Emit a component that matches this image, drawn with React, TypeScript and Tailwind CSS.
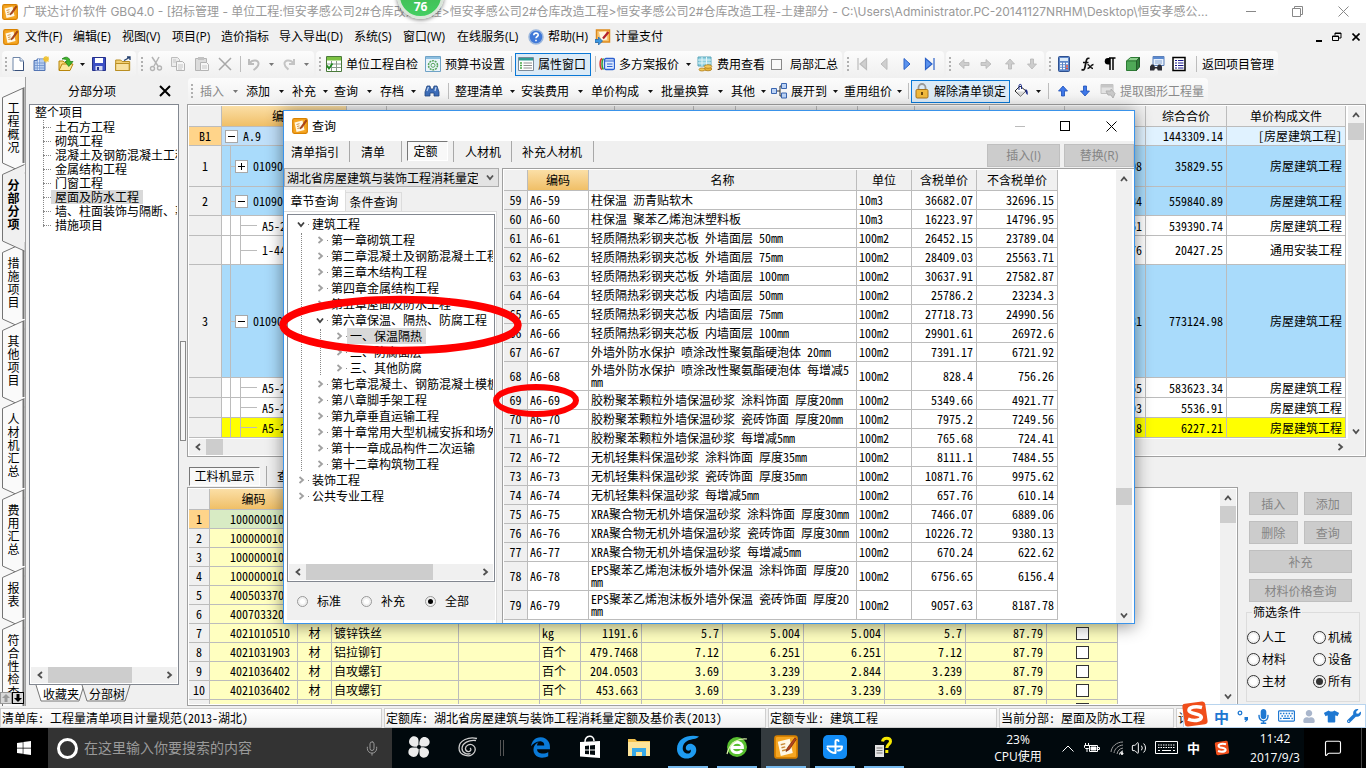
import React from "react";
import { FaWindows, FaEdgeLegacy, FaMicrophone, FaRegKeyboard, FaTshirt, FaWrench, FaUser } from "react-icons/fa";
import { Mic, MessageSquare, Volume2 } from "lucide-react";

type Kids = { children?: React.ReactNode; className?: string };

/* ---------- icons ---------- */

const Svg = ({ children, className = "h-4 w-4" }: Kids) => (
  <svg viewBox="0 0 16 16" className={"shrink-0 " + className} fill="none" aria-hidden="true">
    {children}
  </svg>
);

const AppIcon = ({ className }: { className?: string }) => (
  <Svg className={className}>
    <rect x="0.7" y="0.7" width="14.6" height="14.6" rx="1.5" fill="#f5a623" stroke="#d98200" strokeWidth="1.2" />
    <path d="M2.5 4.5l8-2 2 9.500-8 2z" fill="#fff8e6" />
    <path d="M4.500 6.500l3-.8M5 8.500l2.500-.6M5.400 10.500l4-1" stroke="#c98a3a" strokeWidth="0.9" />
    <path d="M14 1.800L9 8.500l-1 2.500 2.300-1.400L14.800 3z" fill="#b5441c" stroke="#7a2a10" strokeWidth="0.5" />
  </Svg>
);

const NewIcon = () => (
  <Svg>
    <path d="M3 1.500h7l3.500 3.500v9.500h-10.500z" fill="#fff" stroke="#6f86a8" />
    <path d="M10 1.500v3.500h3.500" fill="#dbe6f5" stroke="#6f86a8" />
    <path d="M13.500 6v8.500H5" stroke="#38507a" />
  </Svg>
);
const NewProjectIcon = () => (
  <Svg>
    <path d="M1 4.500h3V3h8v11.500H1z" fill="#8fb2e6" stroke="#5476b4" />
    <path d="M3 5v9M5.500 3v11M8 3v11M10 3v11" stroke="#e6effc" strokeWidth="0.9" />
    <path d="M1 7h11M1 9.500h11M1 12h11" stroke="#6d8fca" strokeWidth="0.8" />
    <path d="M13 0v6.500M10 3h6M11 1l4.500 4.500M15.500 .8l-4.500 4.500" stroke="#f0c230" strokeWidth="1.3" />
  </Svg>
);
const OpenIcon = () => (
  <Svg>
    <path d="M1 14V5h4l1.500 1.500H13V8" fill="#f6d879" stroke="#b8860b" />
    <path d="M1 14.500L4 8h11l-3 6.500z" fill="#fbe79b" stroke="#b8860b" />
    <path d="M4 3c4-3.500 8-1.500 8 2.500h3L10.800 10.500 7 5.500h2C8.800 3.500 7 2.800 4 3z" fill="#3db52b" stroke="#1c7a12" strokeWidth="0.7" />
  </Svg>
);
const SaveIcon = () => (
  <Svg>
    <path d="M1.500 1.500h13v13h-13z" fill="#3c4fc4" stroke="#24308a" />
    <path d="M4 2h8v5H4z" fill="#fff" />
    <path d="M4.500 10h7v4.500h-7z" fill="#d7dcf3" />
    <path d="M6 11h2v3H6z" fill="#24308a" />
  </Svg>
);
const FolderIcon = () => (
  <Svg>
    <path d="M.7 4h5l1.500 1.500h7.500v9H.7z" fill="#f1cf74" stroke="#b98e22" />
    <path d="M.7 7.500h13.500v7H.7z" fill="#f8e1a0" stroke="#b98e22" />
    <path d="M9 4.500L14.500 1.500M12 1h3v3" stroke="#24406e" strokeWidth="1.300" />
  </Svg>
);
const CutIcon = () => (
  <Svg>
    <path d="M4 1l6 9M11 1L6 10" stroke="#b4b4b4" strokeWidth="1.500" />
    <circle cx="4.500" cy="12.500" r="2" stroke="#b4b4b4" strokeWidth="1.400" />
    <circle cx="11.500" cy="12" r="2" stroke="#b4b4b4" strokeWidth="1.400" />
  </Svg>
);
const CopyIcon = () => (
  <Svg>
    <path d="M1.500 1.500h6l2 2v7h-8z" fill="#ececec" stroke="#bdbdbd" />
    <path d="M6.500 5.500h6l2 2v7h-8z" fill="#f6f6f6" stroke="#b4b4b4" />
    <path d="M8 9h5M8 11h5M8 13h4M3 4h3M3 6h3" stroke="#c6c6c6" />
  </Svg>
);
const PasteIcon = () => (
  <Svg>
    <path d="M1.500 2.500h11v12h-11z" fill="#dcdcdc" stroke="#b4b4b4" />
    <path d="M4 1h6v3H4z" fill="#c2c2c2" />
    <path d="M6.500 6.500h6l2 2v6h-8z" fill="#f6f6f6" stroke="#b4b4b4" />
    <path d="M8 10h5M8 12h5" stroke="#c6c6c6" />
  </Svg>
);
const CrossIcon = () => (
  <Svg>
    <path d="M2 2l12 12M14 2L2 14" stroke="#a8a8a8" strokeWidth="1.500" />
  </Svg>
);
const UndoIcon = () => (
  <Svg>
    <path d="M3 3v5h5" stroke="#bcbcbc" strokeWidth="2" />
    <path d="M3.500 7.500C6 3.500 13 3.500 12.500 8c-.3 3-2.500 4.500-5 6" stroke="#bcbcbc" strokeWidth="2" />
  </Svg>
);
const RedoIcon = () => (
  <Svg>
    <path d="M13 3v5H8" stroke="#c4c4c4" strokeWidth="2" />
    <path d="M12.500 7.500C10 3.500 3 3.500 3.500 8c.3 3 2 4 4 5.500" stroke="#c4c4c4" strokeWidth="2" />
  </Svg>
);
const CheckSheetIcon = () => (
  <Svg>
    <path d="M.5 .5h15v15H.5z" fill="#fff" stroke="#4a7a3a" />
    <path d="M1 1h14v3.500H1z" fill="#7dc242" />
    <path d="M5.500 5v10M10.500 5v10M1 8h14M1 11.500h14" stroke="#8a9a8a" />
    <path d="M1 9.500l2 3 3.500-5" stroke="#1f8a1f" strokeWidth="1.800" />
  </Svg>
);
const GearSheetIcon = () => (
  <Svg>
    <path d="M.5 .5h15v15H.5z" fill="#eaf4fb" stroke="#6fa3c7" />
    <path d="M1 1h14v2H1z" fill="#8dbfe0" />
    <circle cx="8" cy="9.300" r="4.500" stroke="#58a55c" strokeWidth="1.500" strokeDasharray="2 .8" />
    <circle cx="8" cy="9.300" r="2" stroke="#58a55c" />
  </Svg>
);
const WindowIcon = () => (
  <Svg>
    <path d="M.5 1.500h15v13H.5z" fill="#fff" stroke="#7b8a99" />
    <path d="M1 2h14v2.500H1z" fill="#2f9c95" />
    <path d="M2 7h2M2 9.500h2M2 12h2" stroke="#4aa84a" strokeWidth="1.300" />
    <path d="M5.500 7H14M5.500 9.500H14M5.500 12H14" stroke="#8f8f8f" />
  </Svg>
);
const PlansIcon = () => (
  <Svg>
    <path d="M3 2.500C.5 4 .5 12 3 13.500" stroke="#d33" strokeWidth="1.500" />
    <path d="M4.500 2.500C2.500 4 2.500 12 4.500 13.500" stroke="#2d9a3a" strokeWidth="1.500" />
    <rect x="5.500" y="2.500" width="10" height="11" rx="1.500" fill="#dfeaff" stroke="#2b5fd0" strokeWidth="1.300" />
    <path d="M6 5h9M8 8h5.500M8 10.500h5.500" stroke="#2b5fd0" strokeWidth="1.200" />
  </Svg>
);
const FeeIcon = () => (
  <Svg>
    <path d="M1 1h13v9H1z" fill="#8fd0e0" stroke="#5aa6ba" />
    <path d="M1 4h13M1 7h13M5 1v9M9.500 1v9" stroke="#e3f5f8" />
    <ellipse cx="11" cy="13" rx="3.800" ry="1.800" fill="#e8b53a" stroke="#a87410" strokeWidth="0.7" />
    <ellipse cx="11" cy="10.500" rx="3.800" ry="1.800" fill="#f3c95c" stroke="#a87410" strokeWidth="0.7" />
    <ellipse cx="5" cy="13.500" rx="3" ry="1.500" fill="#f3c95c" stroke="#a87410" strokeWidth="0.7" />
  </Svg>
);
const NavIcon = ({ kind }: { kind: "first" | "prev" | "next" | "last" }) => {
  const on = kind === "next" || kind === "last";
  const fill = on ? "#5b93ee" : "#cfcfcf";
  const line = on ? "#2c62c8" : "#bcbcbc";
  return (
    <Svg>
      {kind === "first" && <path d="M4 2v12M12.500 2.500L6 8l6.500 5.500z" fill={fill} stroke={line} strokeWidth="1.200" />}
      {kind === "prev" && <path d="M11 2.500L5 8l6 5.500z" fill={fill} stroke={line} />}
      {kind === "next" && <path d="M5 2.500L11 8l-6 5.500z" fill={fill} stroke={line} />}
      {kind === "last" && <path d="M12 2v12M3.500 2.500L10 8l-6.500 5.500z" fill={fill} stroke={line} strokeWidth="1.200" />}
    </Svg>
  );
};
const ArrowIcon = ({ dir, on }: { dir: "l" | "r" | "u" | "d"; on?: boolean }) => {
  const paths = {
    l: "M3 8l5-4.500v3h5v3H8v3z",
    r: "M13 8L8 3.500v3H3v3h5v3z",
    u: "M8 3l4.500 5h-3v5h-3V8h-3z",
    d: "M8 13L3.500 8h3V3h3v5h3z",
  };
  return (
    <Svg>
      <path d={paths[dir]} fill={on ? "#3f78e8" : "#cdcdcd"} stroke={on ? "#1c4fb8" : "#b6b6b6"} strokeWidth="0.8" />
    </Svg>
  );
};
const CalcIcon = () => (
  <Svg>
    <rect x="2.500" y=".5" width="11" height="15" rx="1" fill="#5d86c9" stroke="#2d4f8f" />
    <path d="M4 2h8v3H4z" fill="#dcebf9" />
    <path d="M4 7.500h8M4 10h8M4 12.500h8" stroke="#fff" strokeWidth="1.600" strokeDasharray="2 1" />
    <path d="M10 10h2M10 12.500h2" stroke="#e04a3a" strokeWidth="1.600" />
  </Svg>
);
const FxIcon = () => (
  <Svg>
    <path d="M10.500 2.500C8 1.500 7.500 3.500 7 6l-1 5c-.5 3-1.500 3.500-3.500 2.500M4 6.500h5.500" stroke="#111" strokeWidth="1.700" />
    <path d="M8.500 8.500c2 0 2.500 4 5.500 4M14.500 8.500C12 8.500 11 12.500 8.500 12.500" stroke="#111" strokeWidth="1.300" />
  </Svg>
);
const ParaIcon = () => (
  <Svg>
    <path d="M7 2h6.500M8 2v12M11 2v12" stroke="#000" strokeWidth="1.500" />
    <path d="M8 2H6a3 3 0 000 6.500h2z" fill="#000" />
  </Svg>
);
const CubeIcon = () => (
  <Svg>
    <path d="M1.500 5l4-3.500h9L11.500 5z" fill="#8fd18f" stroke="#2d7a34" />
    <path d="M1.500 5h10v9.500h-10z" fill="#4fa957" stroke="#2d7a34" />
    <path d="M11.500 5l3-3.500V11l-3 3.500z" fill="#2f7d38" stroke="#235c2a" />
  </Svg>
);
const FindSheetIcon = () => (
  <Svg>
    <path d="M4 .5h11v9H4z" fill="#e6effb" stroke="#5b7fb8" />
    <path d="M4 1h11v2H4z" fill="#5b8ad0" />
    <path d="M6 5h7M6 7h7" stroke="#8aa6d0" />
    <path d="M1 14.500v-4l1.500-2h2L6 11h2l1.500-2.500h2l1.500 2v4H8.800L8 12.500H6l-.8 2z" fill="#2c2c34" />
  </Svg>
);
const ListIcon = () => (
  <Svg>
    <path d="M2 1.500h12v13H2z" fill="#fff" stroke="#000" strokeWidth="1.500" />
    <path d="M4 4.500h2M4 7h2M4 9.500h2M4 12h2M7 4.500h5.500M7 7h5.500M7 9.500h5.500M7 12h5.500" stroke="#1a1a8c" />
  </Svg>
);
const BinocularsIcon = () => (
  <Svg>
    <path d="M1 13V9l2-6h3l.8 3h2.400L10 3h3l2 6v4h-5v-3H6v3z" fill="#3d6db8" stroke="#24467e" strokeWidth="0.8" />
    <path d="M3 8l1.500-4M11 8l1-4" stroke="#bcd2f2" strokeWidth="1.200" />
  </Svg>
);
const ExpandIcon = () => (
  <Svg>
    <path d="M5 8h4M9 3v10M9 3h2M9 13h2" stroke="#333" />
    <path d="M.5 5.500h5v5h-5zM10.500 .5h5v5h-5zM10.500 10h5v5h-5z" fill="#bcd3f5" stroke="#3b66b0" />
  </Svg>
);
const LockIcon = () => (
  <Svg>
    <path d="M4.500 7V4.500a3.500 3.500 0 017 0V7" stroke="#9a9a9a" strokeWidth="1.800" />
    <rect x="2" y="6.500" width="12" height="8.500" rx="1.200" fill="#f0b93c" stroke="#a8741a" />
    <path d="M8 9v3" stroke="#5b3c08" strokeWidth="1.800" />
  </Svg>
);
const BucketIcon = () => (
  <Svg>
    <path d="M7 3l6 5-5.500 5L2 8z" fill="#fff" stroke="#222" />
    <path d="M4 8.500h8.500L7.500 13z" fill="#d8d8d8" />
    <path d="M6 7V2.500C6 1 8.500 1 8.500 2.500V6" stroke="#1d2c8a" />
    <path d="M12.500 6c2.500 1 2.500 4 2 6-1-1-2-2-2-4z" fill="#1d2c8a" />
  </Svg>
);
const ExtractIcon = () => (
  <Svg>
    <path d="M1 1.500h12v9H1z" fill="#e2e2e2" stroke="#c2c2c2" />
    <path d="M1 2h12v2.500H1z" fill="#c6c6c6" />
    <path d="M6 8h5V6l4 4.500-2 4.500-2-3H8z" fill="#c9c9c9" stroke="#b2b2b2" />
  </Svg>
);
const HelpIcon = () => (
  <Svg>
    <circle cx="8" cy="8" r="7" fill="#3f78d8" stroke="#9db8dd" strokeWidth="1.500" />
    <path d="M5.800 6.300c0-3 4.600-2.800 4.400-.2-.1 1.400-2.200 1.500-2.200 3.200M8 10.800v1.500" stroke="#fff" strokeWidth="1.600" />
  </Svg>
);
const PayIcon = () => (
  <Svg>
    <path d="M1.500 1h13v12h-13z" fill="#f8c470" stroke="#dd8a1c" strokeWidth="1.500" />
    <path d="M4 3l7-.5 1 8-6 1z" fill="#fff6e2" />
    <path d="M13.500 3L8 9.500" stroke="#b3202c" strokeWidth="2.200" />
    <path d="M0 10.500h3.500V8l4 4-4 4v-2.500H0z" fill="#3a96e0" stroke="#1d62a8" strokeWidth="0.7" />
  </Svg>
);

const Caret = ({ muted }: { muted?: boolean }) => (
  <svg viewBox="0 0 5 3" className="h-[3px] w-[5px]" aria-hidden="true">
    <path d="M0 0h5L2.500 3z" fill={muted ? "#777" : "#111"} />
  </svg>
);

const Chevron = ({ dir, className }: { dir: "u" | "d" | "l" | "r"; className?: string }) => {
  const d = { u: "M2 7l3-3.500L8 7", d: "M2 3.500L5 7l3-3.500", l: "M7 2L3.500 5 7 8", r: "M3.500 2L7 5 3.500 8" };
  return (
    <svg viewBox="0 0 10 10" className={"h-[10px] w-[10px] shrink-0 " + (className ?? "text-[#505050]")} aria-hidden="true">
      <path d={d[dir]} fill="none" stroke="currentColor" strokeWidth="1.800" />
    </svg>
  );
};

const SogouIcon = ({ className }: { className?: string }) => (
  <svg viewBox="0 0 28 28" className={className} aria-hidden="true">
    <rect x="2.500" y="2.500" width="23" height="23" rx="3" fill="#f04e1b" transform="rotate(-8 14 14)" />
    <path d="M21 7.500c-6-1.600-13-.6-13 2.800 0 4.200 12.500 2.600 12.300 6.900-.1 3.600-7.800 4.200-13.300 2" fill="none" stroke="#fff" strokeWidth="3.600" />
  </svg>
);

/* ---------- toolbar parts ---------- */

const Grip = () => (
  <span className="flex w-2 shrink-0 flex-col items-center gap-[2px]">
    {[0, 1, 2, 3].map((i) => (
      <i key={i} className="h-[2px] w-[2px] bg-[#b0b0b0]" />
    ))}
  </span>
);
const Group = ({ children, className = "" }: Kids) => (
  <div className={"flex h-[26px] shrink-0 items-center rounded-sm bg-linear-to-b from-[#fcfcfc] to-[#f0f0f0] " + className}>
    <Grip />
    {children}
  </div>
);
const Tool = ({ w, label, children }: { w: string; label: string; children: React.ReactNode }) => (
  <button aria-label={label} className={"flex h-full shrink-0 items-center justify-center " + w}>
    {children}
  </button>
);
const Sep = ({ w = "w-2" }: { w?: string }) => (
  <span className={"flex shrink-0 justify-center " + w}>
    <i className="h-4 w-px bg-[#bdbdbd]" />
  </span>
);
const TextTool = ({ w, icon, text, caret, muted }: { w: string; icon?: React.ReactNode; text: string; caret?: boolean; muted?: boolean }) => (
  <button className={"flex h-full shrink-0 items-center gap-1 whitespace-nowrap " + w + (muted ? " text-[#8a8a8a]" : "")}>
    {icon}
    {text}
    {caret && (
      <span className="flex flex-1 justify-center pr-1">
        <Caret muted={muted} />
      </span>
    )}
  </button>
);

/* ---------- scroll bars ---------- */

const VScroll = ({ before, thumb }: { before: string; thumb: string }) => (
  <div className="flex w-4 shrink-0 flex-col items-center bg-[#f0f0f0]">
    <button aria-label="向上滚动" className="flex h-[17px] items-center"><Chevron dir="u" /></button>
    <div className="flex w-full flex-1 flex-col">
      <i className={before} />
      <i className={"w-full bg-[#cdcdcd] " + thumb} />
    </div>
    <button aria-label="向下滚动" className="flex h-[17px] items-center"><Chevron dir="d" /></button>
  </div>
);
const HScroll = ({ thumb }: { thumb: string }) => (
  <div className="flex h-4 shrink-0 items-center bg-[#f0f0f0]">
    <button aria-label="向左滚动" className="flex w-[17px] justify-center"><Chevron dir="l" /></button>
    <div className="h-full flex-1"><i className={"block h-full bg-[#cdcdcd] " + thumb} /></div>
    <button aria-label="向右滚动" className="flex w-[17px] justify-center"><Chevron dir="r" /></button>
  </div>
);

/* ---------- side tabs ---------- */

const sideTabs = [
  { text: "工程概况", h: 77, cls: "h-[77px]" },
  { text: "分部分项", h: 78, cls: "h-[78px]", on: true },
  { text: "措施项目", h: 78, cls: "h-[78px]" },
  { text: "其他项目", h: 78, cls: "h-[78px]" },
  { text: "人材机汇总", h: 91, cls: "h-[91px]" },
  { text: "费用汇总", h: 78, cls: "h-[78px]" },
  { text: "报表", h: 52, cls: "h-[52px]" },
  { text: "符合性检查", h: 91, cls: "h-[91px]" },
];

const SideTabs = () => (
  <nav className="relative w-[25px] shrink-0 overflow-hidden bg-[#f7f7f7] pt-5">
    {sideTabs.map((t) => (
      <button key={t.text} className={"relative flex w-full items-start justify-center pt-1 " + t.cls + (t.on ? " z-10 font-bold" : "")}>
        <svg className="absolute inset-0 h-full w-full overflow-visible" aria-hidden="true">
          <path d={`M24.500 -9.500L2.500 .5V${t.h - 11}L24.500 ${t.h - 1}`} fill={t.on ? "#f0f0f0" : "#fafafa"} stroke="#747474" />
          {!t.on && <path d={`M23.500 -9V${t.h - 11}`} stroke="#747474" strokeWidth="2" />}
        </svg>
        <span className="relative w-[14px] whitespace-normal break-all pl-[2px] leading-[13px]">{t.text}</span>
      </button>
    ))}
    <div className="absolute bottom-[2px] left-0 z-20 flex w-6 bg-[#d8d8d8]">
      <button aria-label="上一页" className="flex h-3 w-3 items-center justify-center border border-[#999]">
        <svg viewBox="0 0 8 8" className="h-2 w-2"><path d="M4 0l4 4H5.500v4h-3V4H0z" fill="#999" /></svg>
      </button>
      <button aria-label="下一页" className="flex h-3 w-3 items-center justify-center border border-black">
        <svg viewBox="0 0 8 8" className="h-2 w-2"><path d="M4 8l4-4H5.500V0h-3v4H0z" fill="#000" /></svg>
      </button>
    </div>
  </nav>
);

/* ---------- left project tree ---------- */

const sections = ["土石方工程", "砌筑工程", "混凝土及钢筋混凝土工程", "金属结构工程", "门窗工程", "屋面及防水工程", "墙、柱面装饰与隔断、幕墙工程", "措施项目"];

const LeftPanel = () => (
  <aside className="flex w-[154px] shrink-0 flex-col border-l border-[#a0a0a0] pl-[3px]">
    <header className="flex h-[27px] shrink-0 items-center pr-2">
      <h2 className="flex-1 pl-[39px]">分部分项</h2>
      <button aria-label="关闭">
        <svg viewBox="0 0 12 12" className="h-3 w-3"><path d="M1 1l10 10M11 1L1 11" stroke="#000" strokeWidth="2" /></svg>
      </button>
    </header>
    <div className="flex min-h-0 flex-1 flex-col border border-[#828790] bg-white px-px pb-px">
      <ul className="flex-1 overflow-hidden whitespace-nowrap leading-[14px]">
        <li className="pl-1">
          <span className="block h-[15px]">整个项目</span>
          <ul className="relative ml-2">
            <li aria-hidden="true" className="absolute left-0 top-0 h-[107px] border-l border-dotted border-[#888]" />
            {sections.map((s, i) => (
              <li key={s} className="flex h-[14px] items-center">
                <i className="w-2 shrink-0 border-t border-dotted border-[#888]" />
                <span className={i === 5 ? "bg-[#d9d9d9] pl-1 pr-1" : "pl-1"}>{s}</span>
              </li>
            ))}
          </ul>
        </li>
      </ul>
      <HScroll thumb="w-[84px]" />
    </div>
    <div className="flex h-[21px] shrink-0 items-start pl-2">
      {["收藏夹", "分部树"].map((t, i) => (
        <button key={t} className="relative h-[17px] w-[46px] pl-[6px] text-left leading-[17px]">
          <svg className="absolute inset-0 h-full w-full overflow-visible" aria-hidden="true">
            <path d="M-1 0L4 16H42L47 0" fill={i ? "#f0f0f0" : "#fff"} stroke="#777" />
          </svg>
          <span className="relative">{t}</span>
        </button>
      ))}
    </div>
  </aside>
);

/* ---------- top grid ---------- */

const priceCols = ["w-[33px]", "w-[125px]", "w-[40px]", "", "w-[79px]", "w-[42px]", "w-[81px]", "w-[41px]", "w-[57px]", "w-[75px]", "w-[75px]", "w-[81px]", "w-[81px]", "w-[119px]"];

type PriceRow = { n: string; code: string; lvl: number; sign?: string; h: string; bg: string; part: string; total: string; file: string };
const priceRows: PriceRow[] = [
  { n: "B1", code: "A.9", lvl: 0, sign: "-", h: "h-[19px]", bg: "bg-[#e0f2ff]", part: "", total: "1443309.14", file: "[房屋建筑工程]" },
  { n: "1", code: "01090", lvl: 1, sign: "+", h: "h-[41px]", bg: "bg-[#a9dbfb]", part: "08", total: "35829.55", file: "房屋建筑工程" },
  { n: "2", code: "01090", lvl: 1, sign: "-", h: "h-[29px]", bg: "bg-[#a9dbfb]", part: "34", total: "559840.89", file: "房屋建筑工程" },
  { n: "", code: "A5-2", lvl: 2, h: "h-[20px]", bg: "bg-white", part: "61", total: "539390.74", file: "房屋建筑工程" },
  { n: "", code: "1-44", lvl: 2, h: "h-[29px]", bg: "bg-white", part: "76", total: "20427.25", file: "通用安装工程" },
  { n: "3", code: "01090", lvl: 1, sign: "-", h: "h-[113px]", bg: "bg-[#a9dbfb]", part: "31", total: "773124.98", file: "房屋建筑工程" },
  { n: "", code: "A5-2", lvl: 2, h: "h-[20px]", bg: "bg-white", part: "65", total: "583623.34", file: "房屋建筑工程" },
  { n: "", code: "A5-2", lvl: 2, h: "h-[20px]", bg: "bg-white", part: "93", total: "5536.91", file: "房屋建筑工程" },
  { n: "", code: "A5-2", lvl: 2, h: "h-[20px]", bg: "bg-[#ffff00]", part: "8", total: "6227.21", file: "房屋建筑工程" },
];

const ToggleMark = ({ plus }: { plus: boolean }) => (
  <svg viewBox="0 0 9 9" className="h-[9px] w-[9px]" aria-hidden="true">
    <path d={plus ? "M1 4.500h7M4.500 1v7" : "M1 4.500h7"} stroke="#000" />
  </svg>
);

const PriceGrid = () => (
  <section className="flex h-[353px] shrink-0 flex-col border border-[#a0a0a0] bg-white p-px">
    <div className="flex min-h-0 flex-1">
      <table className="mr-[2px] h-[332px] flex-1 table-fixed border-separate border-spacing-0 leading-3">
        <colgroup>{priceCols.map((c, i) => <col key={i} className={c} />)}</colgroup>
        <thead>
          <tr className="h-[21px]">
            {priceCols.map((_, i) => (
              <th key={i} className={"border-b border-r border-[#bcbcbc] p-0 font-normal " + (i === 1 ? "bg-linear-to-b from-[#fbdfa6] to-[#f0bf66]" : "bg-[#f0f0f0]")}>
                {i === 1 ? "编码" : i === 12 ? "综合合价" : i === 13 ? "单价构成文件" : ""}
              </th>
            ))}
          </tr>
        </thead>
        <tbody>
          {priceRows.map((r, k) => (
            <tr key={k} className={r.h + " " + r.bg}>
              <th className={"border-b border-r border-[#bcbcbc] p-0 font-normal " + (k === 0 ? "bg-[#ffd48a]" : "bg-[#f0f0f0]")}>{r.n}</th>
              <td className={"h-full border-b border-r border-[#bcbcbc] p-0" + (k === 0 ? " bg-[#bfdff9]" : "")}>
                <div className={"flex h-full items-center " + (r.lvl === 0 ? "pl-[3px]" : "ml-2 border-l border-[#bcbcbc]")}>
                  {r.lvl === 2 ? (
                    <span className="ml-[9px] flex h-full items-center border-l border-[#bcbcbc]">
                      <i className="mr-[5px] w-4 border-t border-[#bcbcbc]" />
                      {r.code}
                    </span>
                  ) : (
                    <>
                      {r.lvl === 1 && <i className="w-1 border-t border-[#bcbcbc]" />}
                      <button aria-label="展开或折叠" className="mr-[5px] flex h-[13px] w-[13px] items-center justify-center border border-[#a8a8a8] bg-white">
                        <ToggleMark plus={r.sign === "+"} />
                      </button>
                      {r.code}
                    </>
                  )}
                </div>
              </td>
              {[2, 3, 4, 5, 6, 7, 8, 9, 10].map((i) => <td key={i} className="border-b border-r border-[#bcbcbc]" />)}
              <td className="border-b border-r border-[#bcbcbc] p-0 pr-[3px] text-right">{r.part}</td>
              <td className="border-b border-r border-[#bcbcbc] p-0 pr-[3px] text-right">{r.total}</td>
              <td className="whitespace-nowrap border-b border-r border-[#bcbcbc] p-0 pr-[3px] text-right">{r.file}</td>
            </tr>
          ))}
        </tbody>
      </table>
      <VScroll before="h-0" thumb="h-[17px]" />
    </div>
    <div className="bg-[#f0f0f0] pr-4">
      <HScroll thumb="w-[17px]" />
    </div>
  </section>
);

/* ---------- bottom grid ---------- */

const matCols = ["w-[21px]", "w-[88px]", "w-[34px]", "w-[127px]", "w-[81px]", "w-[41px]", "w-[61px]", "w-[81px]", "w-[81px]", "w-[81px]", "w-[81px]", "w-[81px]", "w-[71px]"];
const matRows: string[][] = [
  ["1000000100"], ["1000000100"], ["1000000100"], ["1000000100"], ["4005033700"], ["4007033200"],
  ["4021010510", "材", "镀锌铁丝", "", "kg", "1191.6", "5.7", "5.004", "5.004", "5.7", "87.79"],
  ["4021031903", "材", "铝拉铆钉", "", "百个", "479.7468", "7.12", "6.251", "6.251", "7.12", "87.79"],
  ["4021036402", "材", "自攻螺钉", "", "百个", "204.0503", "3.69", "3.239", "2.844", "3.239", "87.79"],
  ["4021036402", "材", "自攻螺钉", "", "百个", "453.663", "3.69", "3.239", "3.239", "3.69", "87.79"],
  [""],
];

const MaterialGrid = () => (
  <section className="flex min-w-0 flex-1 overflow-hidden border border-[#a0a0a0] bg-white p-px">
    <div className="flex-1 overflow-hidden">
      <table className="w-[929px] table-fixed border-separate border-spacing-0 leading-3">
        <colgroup>{matCols.map((c, i) => <col key={i} className={c} />)}</colgroup>
        <thead>
          <tr className="h-[21px]">
            {matCols.map((_, i) => (
              <th key={i} className={"border-b border-r border-[#bcbcbc] p-0 font-normal " + (i === 1 ? "bg-linear-to-b from-[#fbdfa6] to-[#f0bf66]" : "bg-[#f0f0f0]")}>
                {i === 1 ? "编码" : ""}
              </th>
            ))}
          </tr>
        </thead>
        <tbody>
          {matRows.map((r, k) => (
            <tr key={k} className="h-[19px] bg-[#ffffc0]">
              <th className={"border-b border-r border-[#bcbcbc] p-0 font-normal " + (k === 0 ? "bg-[#ffd48a]" : "bg-[#f0f0f0]")}>{k < 10 ? k + 1 : ""}</th>
              {Array.from({ length: 11 }, (_, i) => (
                <td
                  key={i}
                  className={
                    "border-b border-r border-[#bcbcbc] p-0 " +
                    (i === 0 ? "pr-[7px] text-right " : i === 1 ? "text-center " : i < 5 ? "pl-[2px] text-left " : "pr-[3px] text-right ") +
                    (k === 0 ? "bg-[#d8ebc4]" : "")
                  }
                >
                  {r[i] ?? ""}
                </td>
              ))}
              <td className="border-b border-r border-[#bcbcbc] p-0">
                <input type="checkbox" aria-label={"选择 " + (k + 1)} className="mx-auto block h-[13px] w-[13px] appearance-none border border-[#333] bg-white" />
              </td>
            </tr>
          ))}
        </tbody>
      </table>
    </div>
    <VScroll before="h-0" thumb="h-[17px]" />
  </section>
);

const grayBtn = "flex h-[23px] items-center justify-center border border-[#bfbfbf] bg-[#cccccc] text-[#858585]";
const filters = ["人工", "机械", "材料", "设备", "主材", "所有"];

const SidePanel = () => (
  <section className="w-[128px] shrink-0 pl-2 pr-[6px] pt-[5px]">
    <div className="grid grid-cols-2 gap-x-[6px] gap-y-[6px] pl-[3px] pr-2">
      {["插入", "添加", "删除", "查询"].map((b) => (
        <button key={b} className={grayBtn}>{b}</button>
      ))}
      <button className={grayBtn + " col-span-2"}>补充</button>
      <button className={grayBtn + " col-span-2"}>材料价格查询</button>
    </div>
    <fieldset className="mt-[2px] h-[98px] border border-[#dcdcdc]">
      <legend className="ml-[5px] px-px leading-4">筛选条件</legend>
      <div className="grid grid-cols-[66px_1fr] gap-y-[6px] pt-[9px]">
        {filters.map((f) => (
          <label key={f} className="flex h-4 items-center gap-[2px] whitespace-nowrap">
            <input
              type="radio"
              name="filter"
              defaultChecked={f === "所有"}
              className="h-[13px] w-[13px] appearance-none rounded-full border border-[#333] bg-white bg-clip-content p-[2px] checked:bg-[#333]"
            />
            {f}
          </label>
        ))}
      </div>
    </fieldset>
  </section>
);

/* ---------- query dialog ---------- */

type Node = { t: string; l: number; open?: boolean; sel?: boolean };
const nodes: Node[] = [
  { t: "建筑工程", l: 0, open: true },
  { t: "第一章砌筑工程", l: 1 },
  { t: "第二章混凝土及钢筋混凝土工程", l: 1 },
  { t: "第三章木结构工程", l: 1 },
  { t: "第四章金属结构工程", l: 1 },
  { t: "第五章屋面及防水工程", l: 1 },
  { t: "第六章保温、隔热、防腐工程", l: 1, open: true },
  { t: "一、保温隔热", l: 2, sel: true },
  { t: "二、防腐面层", l: 2 },
  { t: "三、其他防腐", l: 2 },
  { t: "第七章混凝土、钢筋混凝土模板", l: 1 },
  { t: "第八章脚手架工程", l: 1 },
  { t: "第九章垂直运输工程", l: 1 },
  { t: "第十章常用大型机械安拆和场外", l: 1 },
  { t: "第十一章成品构件二次运输", l: 1 },
  { t: "第十二章构筑物工程", l: 1 },
  { t: "装饰工程", l: 0 },
  { t: "公共专业工程", l: 0 },
];
const indent = ["pl-[7px]", "pl-[26px]", "pl-[45px]"];

const quota: [string, string, string, string][] = [
  ["柱保温 沥青贴软木", "10m3", "36682.07", "32696.15"],
  ["柱保温 聚苯乙烯泡沫塑料板", "10m3", "16223.97", "14796.95"],
  ["轻质隔热彩钢夹芯板 外墙面层 50mm", "100m2", "26452.15", "23789.04"],
  ["轻质隔热彩钢夹芯板 外墙面层 75mm", "100m2", "28409.03", "25563.71"],
  ["轻质隔热彩钢夹芯板 外墙面层 100mm", "100m2", "30637.91", "27582.87"],
  ["轻质隔热彩钢夹芯板 内墙面层 50mm", "100m2", "25786.2", "23234.3"],
  ["轻质隔热彩钢夹芯板 内墙面层 75mm", "100m2", "27718.73", "24990.56"],
  ["轻质隔热彩钢夹芯板 内墙面层 100mm", "100m2", "29901.61", "26972.6"],
  ["外墙外防水保护 喷涂改性聚氨酯硬泡体 20mm", "100m2", "7391.17", "6721.92"],
  ["外墙外防水保护 喷涂改性聚氨酯硬泡体 每增减5\nmm", "100m2", "828.4", "756.26"],
  ["胶粉聚苯颗粒外墙保温砂浆 涂料饰面 厚度20mm", "100m2", "5349.66", "4921.77"],
  ["胶粉聚苯颗粒外墙保温砂浆 瓷砖饰面 厚度20mm", "100m2", "7975.2", "7249.56"],
  ["胶粉聚苯颗粒外墙保温砂浆 每增减5mm", "100m2", "765.68", "724.41"],
  ["无机轻集料保温砂浆 涂料饰面 厚度35mm", "100m2", "8111.1", "7484.55"],
  ["无机轻集料保温砂浆 瓷砖饰面 厚度35mm", "100m2", "10871.76", "9975.62"],
  ["无机轻集料保温砂浆 每增减5mm", "100m2", "657.76", "610.14"],
  ["XRA聚合物无机外墙保温砂浆 涂料饰面 厚度30mm", "100m2", "7466.07", "6889.06"],
  ["XRA聚合物无机外墙保温砂浆 瓷砖饰面 厚度30mm", "100m2", "10226.72", "9380.13"],
  ["XRA聚合物无机外墙保温砂浆 每增减5mm", "100m2", "670.24", "622.62"],
  ["EPS聚苯乙烯泡沫板外墙外保温 涂料饰面 厚度20\nmm", "100m2", "6756.65", "6156.4"],
  ["EPS聚苯乙烯泡沫板外墙外保温 瓷砖饰面 厚度20\nmm", "100m2", "9057.63", "8187.78"],
];
const cell = "border-b border-r border-[#bcbcbc] p-0 ";

const QueryDialog = () => (
  <div
    role="dialog"
    aria-label="查询"
    className="absolute left-[283px] top-[110px] z-30 flex h-[514px] w-[852px] flex-col overflow-hidden border border-[#3a93ea] bg-[#f0f0f0] shadow-[0_2px_16px_rgba(0,0,0,0.45)]"
  >
    <header className="flex h-[30px] shrink-0 items-center bg-white pl-2 font-['Noto_Sans_CJK_SC',sans-serif]">
      <AppIcon />
      <h2 className="flex-1 pl-1">查询</h2>
      <button aria-label="最小化" className="flex w-[45px] justify-center"><i className="h-px w-[10px] bg-[#bbb]" /></button>
      <button aria-label="最大化" className="flex w-[46px] justify-center"><i className="h-[10px] w-[10px] border border-black" /></button>
      <button aria-label="关闭" className="flex w-[46px] justify-center">
        <svg viewBox="0 0 11 11" className="h-[11px] w-[11px]"><path d="M.5 .5l10 10M10.500 .5l-10 10" stroke="#000" /></svg>
      </button>
    </header>
    <nav className="flex h-[27px] shrink-0 items-start">
      <button className="h-[21px] w-[66px] border-r border-[#a8a8a8] pl-[7px] text-left">清单指引</button>
      <button className="h-[21px] w-[52px] border-r border-[#a8a8a8] pl-[11px] text-left">清单</button>
      <span className="flex h-[21px] w-[52px] border-r border-[#a8a8a8] pl-[5px]">
        <button className="h-5 w-[41px] border border-b-white border-l-[#777] border-r-white border-t-[#777] bg-[#f8f8f8] pr-1">定额</button>
      </span>
      <button className="h-[21px] w-[58px] border-r border-[#a8a8a8] pl-[11px] text-left">人材机</button>
      <button className="h-[21px] w-[82px] border-r border-[#a8a8a8] pl-[10px] text-left">补充人材机</button>
      <div className="ml-auto mt-[3px] flex gap-1 font-['Open_Sans','Noto_Sans_CJK_SC',sans-serif]">
        <button className={grayBtn + " w-[73px]"}>插入(I)</button>
        <button className={grayBtn + " w-[70px]"}>替换(R)</button>
      </div>
    </nav>
    <div className="flex min-h-0 flex-1">
      <div className="flex w-[218px] shrink-0 flex-col">
        <label className="relative block h-[19px] w-[215px]">
          <select aria-label="定额库" className="h-full w-full appearance-none overflow-hidden border border-[#adadad] bg-[#e3e3e3] pl-[2px] pr-5 leading-none">
            <option>湖北省房屋建筑与装饰工程消耗量定额及基价表(2013)</option>
          </select>
          <Chevron dir="d" className="absolute right-1 top-1 text-[#555]" />
        </label>
        <div className="flex h-6 shrink-0 items-end">
          <button className="h-[21px] w-[62px] border-r border-[#dcdcdc] bg-white">章节查询</button>
          <button className="h-[19px] w-[56px] border border-b-0 border-l-0 border-[#dcdcdc] bg-[#f0f0f0]">条件查询</button>
        </div>
        <div className="mr-[5px] flex min-h-0 flex-1 flex-col border-r border-t border-[#dcdcdc] bg-white p-[3px] pr-px pt-[2px]">
          <div className="flex min-h-0 flex-1 flex-col border border-[#828790] px-px pb-px">
            <ul className="relative flex-1 overflow-hidden pt-px">
              <li aria-hidden="true" className="absolute left-3 top-[18px] h-[238px] border-l border-dotted border-[#888]" />
              <li aria-hidden="true" className="absolute left-[31px] top-[114px] h-[46px] border-l border-dotted border-[#888]" />
              {nodes.map((n) => (
                <li key={n.t} className={"flex h-4 items-center whitespace-nowrap " + indent[n.l]}>
                  <Chevron dir={n.open ? "d" : "r"} className={n.open ? "text-[#404040]" : "text-[#a0a0a0]"} />
                  <i className={"ml-[2px] h-px w-px shrink-0 bg-[#888]" + (n.sel ? "" : " mr-[3px]")} />
                  <span className={n.sel ? "h-4 bg-[#d9d9d9] pl-[3px] pr-1 leading-4" : "leading-4"}>{n.t}</span>
                </li>
              ))}
            </ul>
            <HScroll thumb="w-[127px]" />
          </div>
          <div className="flex h-[38px] shrink-0 items-center bg-[#f0f0f0] pl-[10px]">
            {["标准", "补充", "全部"].map((r) => (
              <label key={r} className="flex w-16 items-center gap-[9px]">
                <input
                  type="radio"
                  name="scope"
                  defaultChecked={r === "全部"}
                  className="h-[11px] w-[11px] appearance-none rounded-full border border-[#999] bg-white bg-clip-content p-[2px] checked:bg-black"
                />
                {r}
              </label>
            ))}
          </div>
        </div>
      </div>
      <div className="flex min-w-0 flex-1 border-l border-t border-[#a0a0a0] bg-white pl-px pt-px">
        <div className="flex-1 overflow-hidden">
          <table className="w-[554px] table-fixed border-separate border-spacing-0 leading-3">
            <colgroup>
              <col className="w-[24px]" />
              <col className="w-[61px]" />
              <col className="w-[268px]" />
              <col className="w-[55px]" />
              <col className="w-[65px]" />
              <col className="w-[81px]" />
            </colgroup>
            <thead>
              <tr className="h-[21px] bg-[#f0f0f0]">
                {["", "编码", "名称", "单位", "含税单价", "不含税单价"].map((h, i) => (
                  <th key={i} className={cell + "font-normal" + (i === 1 ? " bg-linear-to-b from-[#fbdfa6] to-[#f0bf66]" : "")}>{h}</th>
                ))}
              </tr>
            </thead>
            <tbody>
              {quota.map((q, i) => (
                <tr key={i} className={q[0].includes("\n") ? "h-[29px]" : "h-[19px]"}>
                  <th className={cell + "bg-[#f0f0f0] font-normal"}>{59 + i}</th>
                  <td className={cell + "pl-[2px]"}>A6-{59 + i}</td>
                  <td className={cell + "overflow-hidden whitespace-pre pl-[2px]"}>{q[0]}</td>
                  <td className={cell + "pl-[2px]"}>{q[1]}</td>
                  <td className={cell + "pr-[3px] text-right"}>{q[2]}</td>
                  <td className={cell + "pr-[3px] text-right"}>{q[3]}</td>
                </tr>
              ))}
            </tbody>
          </table>
        </div>
        <VScroll before="h-[301px]" thumb="h-[17px]" />
        <i className="w-[2px]" />
      </div>
    </div>
  </div>
);

/* ---------- bars ---------- */

const menus = [
  ["文件(F)", "w-[48px]"], ["编辑(E)", "w-[49px]"], ["视图(V)", "w-[50px]"], ["项目(P)", "w-[49px]"], ["造价指标", "w-[58px]"],
  ["导入导出(D)", "w-[75px]"], ["系统(S)", "w-[49px]"], ["窗口(W)", "w-[54px]"], ["在线服务(L)", "w-[71px]"],
];

const TitleBar = () => (
  <header className="relative flex h-[23px] shrink-0 items-center bg-white pl-[2px] text-[#999]">
    <AppIcon />
    <h1 className="min-w-0 flex-1 overflow-hidden whitespace-nowrap pl-[5px] font-['Inter','Noto_Sans_CJK_SC',sans-serif]">
      广联达计价软件 GBQ4.0 - [招标管理 - 单位工程:恒安孝感公司2#仓库改造工程&gt;恒安孝感公司2#仓库改造工程&gt;恒安孝感公司2#仓库改造工程-土建部分 - C:\Users\Administrator.PC-20141127NRHM\Desktop\恒安孝感公...
    </h1>
    <div className="flex shrink-0 items-center">
      <button aria-label="最小化" className="flex w-[46px] justify-center"><i className="h-px w-[10px] bg-[#888]" /></button>
      <button aria-label="还原" className="flex w-[46px] justify-center">
        <svg viewBox="0 0 11 11" className="h-[11px] w-[11px]" fill="none" stroke="#888"><path d="M.5 2.500h8v8h-8zM2.500 2.500v-2h8v8h-2" /></svg>
      </button>
      <button aria-label="关闭" className="flex w-[46px] justify-center">
        <svg viewBox="0 0 11 11" className="h-[11px] w-[11px]"><path d="M.5 .5l10 10M10.500 .5l-10 10" stroke="#888" /></svg>
      </button>
    </div>
    <div className="absolute left-[397px] top-[-28px] flex h-[47px] w-[47px] items-end justify-center rounded-full border-[3px] border-[#d9e6d9] bg-linear-to-b from-[#3fae4a] to-[#43cf62] pb-[2px] font-['Noto_Sans',sans-serif] text-xs font-bold leading-[14px] text-white shadow-[0_1px_4px_rgba(0,0,0,0.5)]">
      76
    </div>
  </header>
);

const MenuBar = () => (
  <nav className="flex h-[27px] shrink-0 items-center bg-[#f0f0f0] pl-[3px] font-['Open_Sans','Noto_Sans_CJK_SC',sans-serif]">
    <AppIcon />
    <span className="w-[6px]" />
    {menus.map(([t, w]) => (
      <button key={t} className={"shrink-0 whitespace-nowrap text-left " + w}>{t}</button>
    ))}
    <button className="flex w-[67px] shrink-0 items-center gap-1"><HelpIcon />帮助(H)</button>
    <button className="flex shrink-0 items-center gap-1"><PayIcon />计量支付</button>
    <div className="ml-auto flex items-center gap-[10px] pr-[6px]">
      <button aria-label="最小化子窗口"><i className="mt-2 block h-[2px] w-[6px] bg-black" /></button>
      <button aria-label="还原子窗口">
        <svg viewBox="0 0 10 9" className="h-[9px] w-[10px]" fill="none" stroke="#000"><path d="M.5 4h6v4.500h-6zM.5 4.500h6M3 3.500V1h6v5H7M3 1.500h6" /></svg>
      </button>
      <button aria-label="关闭子窗口">
        <svg viewBox="0 0 8 8" className="h-2 w-2"><path d="M.5 .5l7 7M7.500 .5l-7 7" stroke="#000" strokeWidth="1.600" /></svg>
      </button>
    </div>
  </nav>
);

const MainToolbar = () => (
  <div className="flex h-[27px] shrink-0 items-start gap-[2px] overflow-hidden pl-[2px] pt-px">
    <Group>
      <Tool w="w-4" label="新建"><NewIcon /></Tool>
      <Tool w="w-[30px]" label="新建项目"><NewProjectIcon /></Tool>
      <Tool w="w-5" label="打开"><OpenIcon /></Tool>
      <Tool w="w-3" label="最近文件"><Caret /></Tool>
      <Tool w="w-[22px]" label="保存"><SaveIcon /></Tool>
      <Tool w="w-[26px]" label="文件夹"><FolderIcon /></Tool>
    </Group>
    <Group className="pr-[2px]">
      <Tool w="w-5" label="剪切"><CutIcon /></Tool>
      <Tool w="w-6" label="复制"><CopyIcon /></Tool>
      <Tool w="w-6" label="粘贴"><PasteIcon /></Tool>
      <Tool w="w-[22px]" label="删除"><CrossIcon /></Tool>
      <Sep />
      <Tool w="w-5" label="撤销"><UndoIcon /></Tool>
      <Tool w="w-[14px]" label="撤销列表"><Caret muted /></Tool>
      <Tool w="w-[22px]" label="恢复"><RedoIcon /></Tool>
      <Tool w="w-3" label="恢复列表"><Caret muted /></Tool>
    </Group>
    <Group>
      <TextTool w="w-[98px] pl-[2px]" icon={<CheckSheetIcon />} text="单位工程自检" />
      <TextTool w="w-[86px] pl-[3px]" icon={<GearSheetIcon />} text="预算书设置" />
      <Sep w="w-[7px]" />
      <button className="flex h-[23px] w-[76px] shrink-0 items-center gap-1 whitespace-nowrap border border-[#0a78d6] bg-[#dcebf7] pl-[2px]">
        <WindowIcon />属性窗口
      </button>
      <Sep />
      <TextTool w="w-[98px]" icon={<PlansIcon />} text="多方案报价" caret />
      <TextTool w="w-[72px]" icon={<FeeIcon />} text="费用查看" />
      <label className="flex w-[73px] items-center gap-2 whitespace-nowrap pl-[2px]">
        <input type="checkbox" className="h-[11px] w-[11px] appearance-none border border-[#888] bg-[#f8f8f8]" />
        局部汇总
      </label>
    </Group>
    <Group className="pr-[2px]">
      <Tool w="w-5" label="第一条"><NavIcon kind="first" /></Tool>
      <Tool w="w-6" label="上一条"><NavIcon kind="prev" /></Tool>
      <Tool w="w-[22px]" label="下一条"><NavIcon kind="next" /></Tool>
      <Tool w="w-6" label="最后一条"><NavIcon kind="last" /></Tool>
    </Group>
    <Group className="pr-[2px]">
      <Tool w="w-5" label="升级"><ArrowIcon dir="l" /></Tool>
      <Tool w="w-6" label="降级"><ArrowIcon dir="r" /></Tool>
      <Tool w="w-6" label="上移"><ArrowIcon dir="u" /></Tool>
      <Tool w="w-5" label="下移"><ArrowIcon dir="d" /></Tool>
    </Group>
    <Group>
      <Tool w="w-5" label="计算器"><CalcIcon /></Tool>
      <Tool w="w-[26px]" label="函数"><FxIcon /></Tool>
      <Tool w="w-5" label="段落"><ParaIcon /></Tool>
      <Tool w="w-[26px]" label="图元"><CubeIcon /></Tool>
      <Tool w="w-[22px]" label="查找"><FindSheetIcon /></Tool>
      <Tool w="w-[22px]" label="列表"><ListIcon /></Tool>
      <Sep w="w-3" />
      <TextTool w="w-[76px]" text="返回项目管理" />
    </Group>
  </div>
);

const EditToolbar = () => (
  <div className="flex h-[27px] shrink-0 items-start pl-px pt-px">
    <Group>
      <span className="w-1" />
      <TextTool w="w-[46px]" text="插入" caret muted />
      <TextTool w="w-[46px]" text="添加" caret />
      <TextTool w="w-[42px]" text="补充" caret />
      <TextTool w="w-[46px]" text="查询" caret />
      <TextTool w="w-[42px]" text="存档" caret />
      <Tool w="w-5" label="查找"><BinocularsIcon /></Tool>
      <Sep w="w-[13px]" />
      <TextTool w="w-[66px]" text="整理清单" caret />
      <TextTool w="w-[70px]" text="安装费用" caret />
      <TextTool w="w-[70px]" text="单价构成" caret />
      <TextTool w="w-[70px]" text="批量换算" caret />
      <TextTool w="w-10" text="其他" caret />
      <TextTool w="w-[73px]" icon={<ExpandIcon />} text="展开到" caret />
      <TextTool w="w-[62px]" text="重用组价" caret />
      <Sep w="w-[5px]" />
      <button className="flex h-[23px] w-[99px] shrink-0 items-center gap-1 whitespace-nowrap border border-[#0a78d6] bg-[#dcebf7] pl-[2px]">
        <LockIcon />解除清单锁定
      </button>
      <Tool w="w-[22px]" label="填充颜色"><BucketIcon /></Tool>
      <Tool w="w-3" label="颜色列表"><Caret /></Tool>
      <Sep />
      <Tool w="w-[22px]" label="上移"><ArrowIcon dir="u" on /></Tool>
      <Tool w="w-[22px]" label="下移"><ArrowIcon dir="d" on /></Tool>
      <span className="w-1" />
      <TextTool w="w-[108px]" icon={<ExtractIcon />} text="提取图形工程量" muted />
    </Group>
  </div>
);

const status = [
  ["清单库: 工程量清单项目计量规范(2013-湖北)", "w-[382px]"],
  ["定额库: 湖北省房屋建筑与装饰工程消耗量定额及基价表(2013)", "w-[382px]"],
  ["定额专业: 建筑工程", "w-[229px]"],
  ["当前分部: 屋面及防水工程", "w-[175px]"],
  ["计", "flex-1"],
];

const StatusBar = () => (
  <footer className="relative flex h-[22px] shrink-0 gap-[2px] bg-[#f0f0f0] pt-[2px]">
    {status.map(([t, w]) => (
      <span key={t} className={"shrink-0 overflow-hidden whitespace-nowrap border border-[#cfcfcf] bg-linear-to-b from-white to-[#f0f0f0] pl-px leading-[18px] " + w}>{t}</span>
    ))}
    <div className="absolute bottom-0 right-0 flex h-6 w-[183px] items-center justify-between border border-[#b8d4ee] bg-white pl-[30px] pr-1 text-[#1e78d2]">
      <SogouIcon className="absolute left-[-3px] top-[-5px] h-7 w-7" />
      <span className="font-['Noto_Sans_CJK_SC',sans-serif] text-[15px] font-bold leading-none">中</span>
      <svg viewBox="0 0 12 12" className="h-3 w-3"><circle cx="3" cy="3" r="1.800" fill="none" stroke="currentColor" strokeWidth="1.300" /><path d="M7.500 7h3.500v3l-2.500 2-.8-.6 1.300-1.400H7.500z" fill="currentColor" /></svg>
      <FaMicrophone className="h-[15px] w-[13px]" />
      <FaRegKeyboard className="h-4 w-[17px]" />
      <FaUser className="h-[13px] w-[14px] text-[#a9b6cc]" />
      <FaTshirt className="h-[13px] w-[15px]" />
      <FaWrench className="h-[14px] w-[14px]" />
    </div>
  </footer>
);

const TaskItem = ({ children, label, run, on }: { children: React.ReactNode; label: string; run?: boolean; on?: boolean }) => (
  <button aria-label={label} className={"flex h-full w-[49px] shrink-0 justify-center px-1 " + (on ? "bg-[#343b3f]" : "")}>
    <span className={"flex h-full w-10 items-center justify-center " + (run ? "border-b-2 border-[#76b9ed]" : "border-b-2 border-transparent")}>{children}</span>
  </button>
);

const TaskBar = () => (
  <footer className="flex h-10 shrink-0 items-center bg-[#01090d] font-['Open_Sans','Noto_Sans_CJK_SC',sans-serif] text-white">
    <button aria-label="开始" className="flex h-full w-12 shrink-0 items-center justify-center bg-black"><FaWindows className="h-4 w-4" /></button>
    <label className="flex h-full w-[344px] shrink-0 items-center bg-[#333] pl-[9px] pr-3">
      <i className="h-[21px] w-[21px] rounded-full border-[3px] border-white" />
      <input aria-label="搜索" placeholder="在这里输入你要搜索的内容" className="ml-[6px] min-w-0 flex-1 bg-transparent text-sm leading-5 placeholder:text-[#9a9a9a]" />
      <Mic className="h-[17px] w-4 text-[#9a9a9a]" strokeWidth={1.5} />
    </label>
    <span className="w-[2px] shrink-0" />
    <TaskItem label="风扇">
      <svg viewBox="0 0 22 22" className="h-[22px] w-[22px]" fill="#ececec">
        <path d="M10.500 10.500C2 12-1.500 6 3 1.500 5-.5 10 0 10.500 4z" />
        <path d="M11.500 10.500C10 2 16-1.500 20.500 3c2 2 1.500 7-2.500 7.500z" />
        <path d="M11.500 11.500c8.500-1.500 12 4.500 7.500 9-2 2-7 1.500-7.500-2.500z" />
        <path d="M10.500 11.500c1.500 8.500-4.500 12-9 7.500-2-2-1.500-7 2.500-7.500z" />
        <circle cx="11" cy="11" r="2" fill="#01090d" />
      </svg>
    </TaskItem>
    <TaskItem label="漩涡">
      <svg viewBox="0 0 20 20" className="h-5 w-5" fill="none" stroke="#cfcfcf" strokeWidth="1.300">
        <path d="M19 1.500C11-.5 1 3 1 11c0 8 12 10.500 15.500 4C19 10 14 6 10 8c-4 2-3 7 1 6.500 2-.3 2.500-2.500 1-3.500" />
        <path d="M18 3.500C11 2.500 4 6 4 11.500c0 4 5 6.500 8.500 5" />
      </svg>
    </TaskItem>
    <span className="mx-2 flex h-4 w-1 shrink-0 justify-between"><i className="w-px bg-[#555]" /><i className="w-px bg-[#555]" /></span>
    <span className="w-1 shrink-0" />
    <TaskItem label="浏览器"><FaEdgeLegacy className="h-[21px] w-[21px] text-[#0a7ad8]" /></TaskItem>
    <TaskItem label="应用商店">
      <svg viewBox="0 0 22 24" className="h-6 w-[22px]">
        <path d="M1 7l20-1v17L1 21.500z" fill="#fff" />
        <path d="M6 7c0-7 9-8 9-1" fill="none" stroke="#fff" strokeWidth="1.500" />
        <path d="M6 11l4-.4v3.900H6zM11 10.500l5-.5v4.500h-5zM6 15.500h4v3.800l-4-.4zM11 15.500h5v4.400l-5-.5z" fill="#01090d" />
      </svg>
    </TaskItem>
    <TaskItem label="文件资源管理器">
      <svg viewBox="0 0 22 18" className="h-[18px] w-[22px]">
        <path d="M0 1h7l2 2h13v15H0z" fill="#f2c14e" />
        <path d="M0 4h22v14H0z" fill="#fde49a" />
        <path d="M4 10h14v8h-4v-4H8v4H4z" fill="#37a9e8" />
      </svg>
    </TaskItem>
    <TaskItem label="广联达" run>
      <svg viewBox="0 0 24 24" className="h-6 w-6">
        <path d="M23 1.500C13-1 1 3 1 14c0 9 10 12 16 7.500 5-4 4-11-1-12.500-4-1-7 2-6 5 .8 2 3.500 2.300 4.500.5 1.500 3-2 5-5 3.500C5 16 6 8 12 5.500c3.500-1.500 8-1 11-4z" fill="#1e9bf0" />
      </svg>
    </TaskItem>
    <TaskItem label="安全浏览器" run>
      <svg viewBox="0 0 22 22" className="h-[22px] w-[22px]">
        <circle cx="11" cy="11" r="10" fill="#58bf2f" />
        <path d="M5.500 11.500h11c0-7-10.500-7-11 0 0 6 8 6.500 10.500 2.700" fill="none" stroke="#fff" strokeWidth="2.800" />
        <path d="M1 18C4 5 14 2 21 3" fill="none" stroke="#d9f2a8" strokeWidth="1.200" />
      </svg>
    </TaskItem>
    <TaskItem label="计价软件" run on><AppIcon className="h-6 w-6" /></TaskItem>
    <TaskItem label="云助手" run>
      <svg viewBox="0 0 24 24" className="h-6 w-6">
        <rect width="24" height="24" rx="5" fill="#128cf5" />
        <path d="M12.500 18c-4 0-6-1.500-8-4.500M4.500 11.500H19M12.500 18V6c0-1.500 3-1.500 3 0M19 11.500c0 3-1.500 4-4 4" fill="none" stroke="#fff" strokeWidth="2" strokeLinecap="round" />
      </svg>
    </TaskItem>
    <TaskItem label="帮助文档" run>
      <svg viewBox="0 0 20 22" className="h-[22px] w-5">
        <path d="M1 9h9v12H1z" fill="#e4e4e4" />
        <path d="M2.500 12h6M2.500 14.500h6M2.500 17h6" stroke="#777" />
        <path d="M8.500 5.500C9 1 17 1 16.500 5.500c-.3 3-3.500 3-3.700 6.500M12.800 14v3" fill="none" stroke="#f6e800" strokeWidth="3" />
      </svg>
    </TaskItem>
    <div className="ml-auto flex h-full shrink-0 items-center text-xs">
      <div className="w-[60px] text-center leading-[17px]">23%<br />CPU使用</div>
      <svg viewBox="0 0 12 7" className="ml-[14px] h-[7px] w-3" fill="none" stroke="#fff"><path d="M.5 6.500L6 1l5.500 5.500" /></svg>
      <svg viewBox="0 0 16 12" className="ml-[10px] h-3 w-4" fill="none" stroke="#fff"><path d="M5.500 3.500h8v6h-8zM14 5.500h1.500v2H14M1.500 1v2M4.500 1v2M.5 3.500h5v2l-1 1h-3l-1-1zM3 7v3" /><path d="M7 5h5v3H7z" fill="#fff" /></svg>
      <svg viewBox="0 0 14 14" className="ml-[10px] h-[14px] w-[14px]" fill="none" stroke="#fff">
        <path d="M1 11C1.500 5.500 6.500 1 13 1M4 12c.5-4 4-7.500 9-8M7 13c.5-3 2.500-5.500 6-6" stroke="#9a9a9a" />
        <path d="M9.500 13.500c.3-2 1.500-3.300 3.500-3.500" /><circle cx="12" cy="12.500" r="1" fill="#fff" />
      </svg>
      <Volume2 className="ml-[7px] h-[18px] w-4" strokeWidth={1.5} />
      <svg viewBox="0 0 24 14" className="ml-2 h-[14px] w-6" fill="none" stroke="#fff">
        <path d="M.5 .5h22v12H.5z" />
        <path d="M3 4h17M3 6.500h17" strokeDasharray="1.500 1" />
        <path d="M3 9.500h2M7 9.500h9M18 9.500h2" />
      </svg>
      <span className="ml-2 font-['Noto_Sans_CJK_SC',sans-serif] text-[13px] font-bold">中</span>
      <SogouIcon className="ml-[14px] h-4 w-4" />
      <time className="ml-4 w-[58px] text-center leading-[19px]">11:42<br />2017/9/3</time>
      <button aria-label="通知" className="flex h-full w-[57px] items-center justify-center bg-black"><MessageSquare className="h-[18px] w-[18px]" strokeWidth={1.5} /></button>
      <i className="h-full w-[5px] border-l border-[#444] bg-black" />
    </div>
  </footer>
);

export default function App() {
  return (
    <div className="relative flex h-screen flex-col overflow-hidden bg-[#f0f0f0] font-['Noto_Sans_CJK_SC',sans-serif] text-xs text-black">
      <TitleBar />
      <MenuBar />
      <MainToolbar />
      <main className="flex min-h-0 flex-1 font-['Noto_Sans_Mono_CJK_SC','Noto_Sans_CJK_SC',monospace]">
        <SideTabs />
        <LeftPanel />
        <div className="flex w-2 shrink-0 flex-col items-center">
          <i className="mt-[264px] h-[100px] w-[6px] border border-[#888] bg-[#f6f6f6]" />
        </div>
        <div className="flex min-w-0 flex-1 flex-col">
          <EditToolbar />
          <PriceGrid />
          <nav className="flex h-[30px] shrink-0 items-center gap-[6px] pl-[2px] pt-2">
            <button className="h-[19px] w-[71px] border border-b-white border-l-[#777] border-r-white border-t-[#777] bg-[#f8f8f8] leading-none">工料机显示</button>
            <i className="h-5 w-px bg-[#a8a8a8]" />
            <button className="pl-1">查询</button>
          </nav>
          <div className="flex min-h-0 flex-1">
            <MaterialGrid />
            <SidePanel />
          </div>
        </div>
      </main>
      <div className="contents font-['Noto_Sans_Mono_CJK_SC','Noto_Sans_CJK_SC',monospace]">
        <StatusBar />
        <QueryDialog />
      </div>
      <TaskBar />
      <svg className="pointer-events-none absolute left-[279px] top-[295px] z-40 h-[124px] w-[304px]" fill="none" stroke="#ff0000" aria-hidden="true">
        <ellipse cx="121.500" cy="30" rx="117.500" ry="25.500" strokeWidth="7.500" />
        <ellipse cx="257" cy="105.500" rx="40" ry="13.500" strokeWidth="6" />
      </svg>
    </div>
  );
}
